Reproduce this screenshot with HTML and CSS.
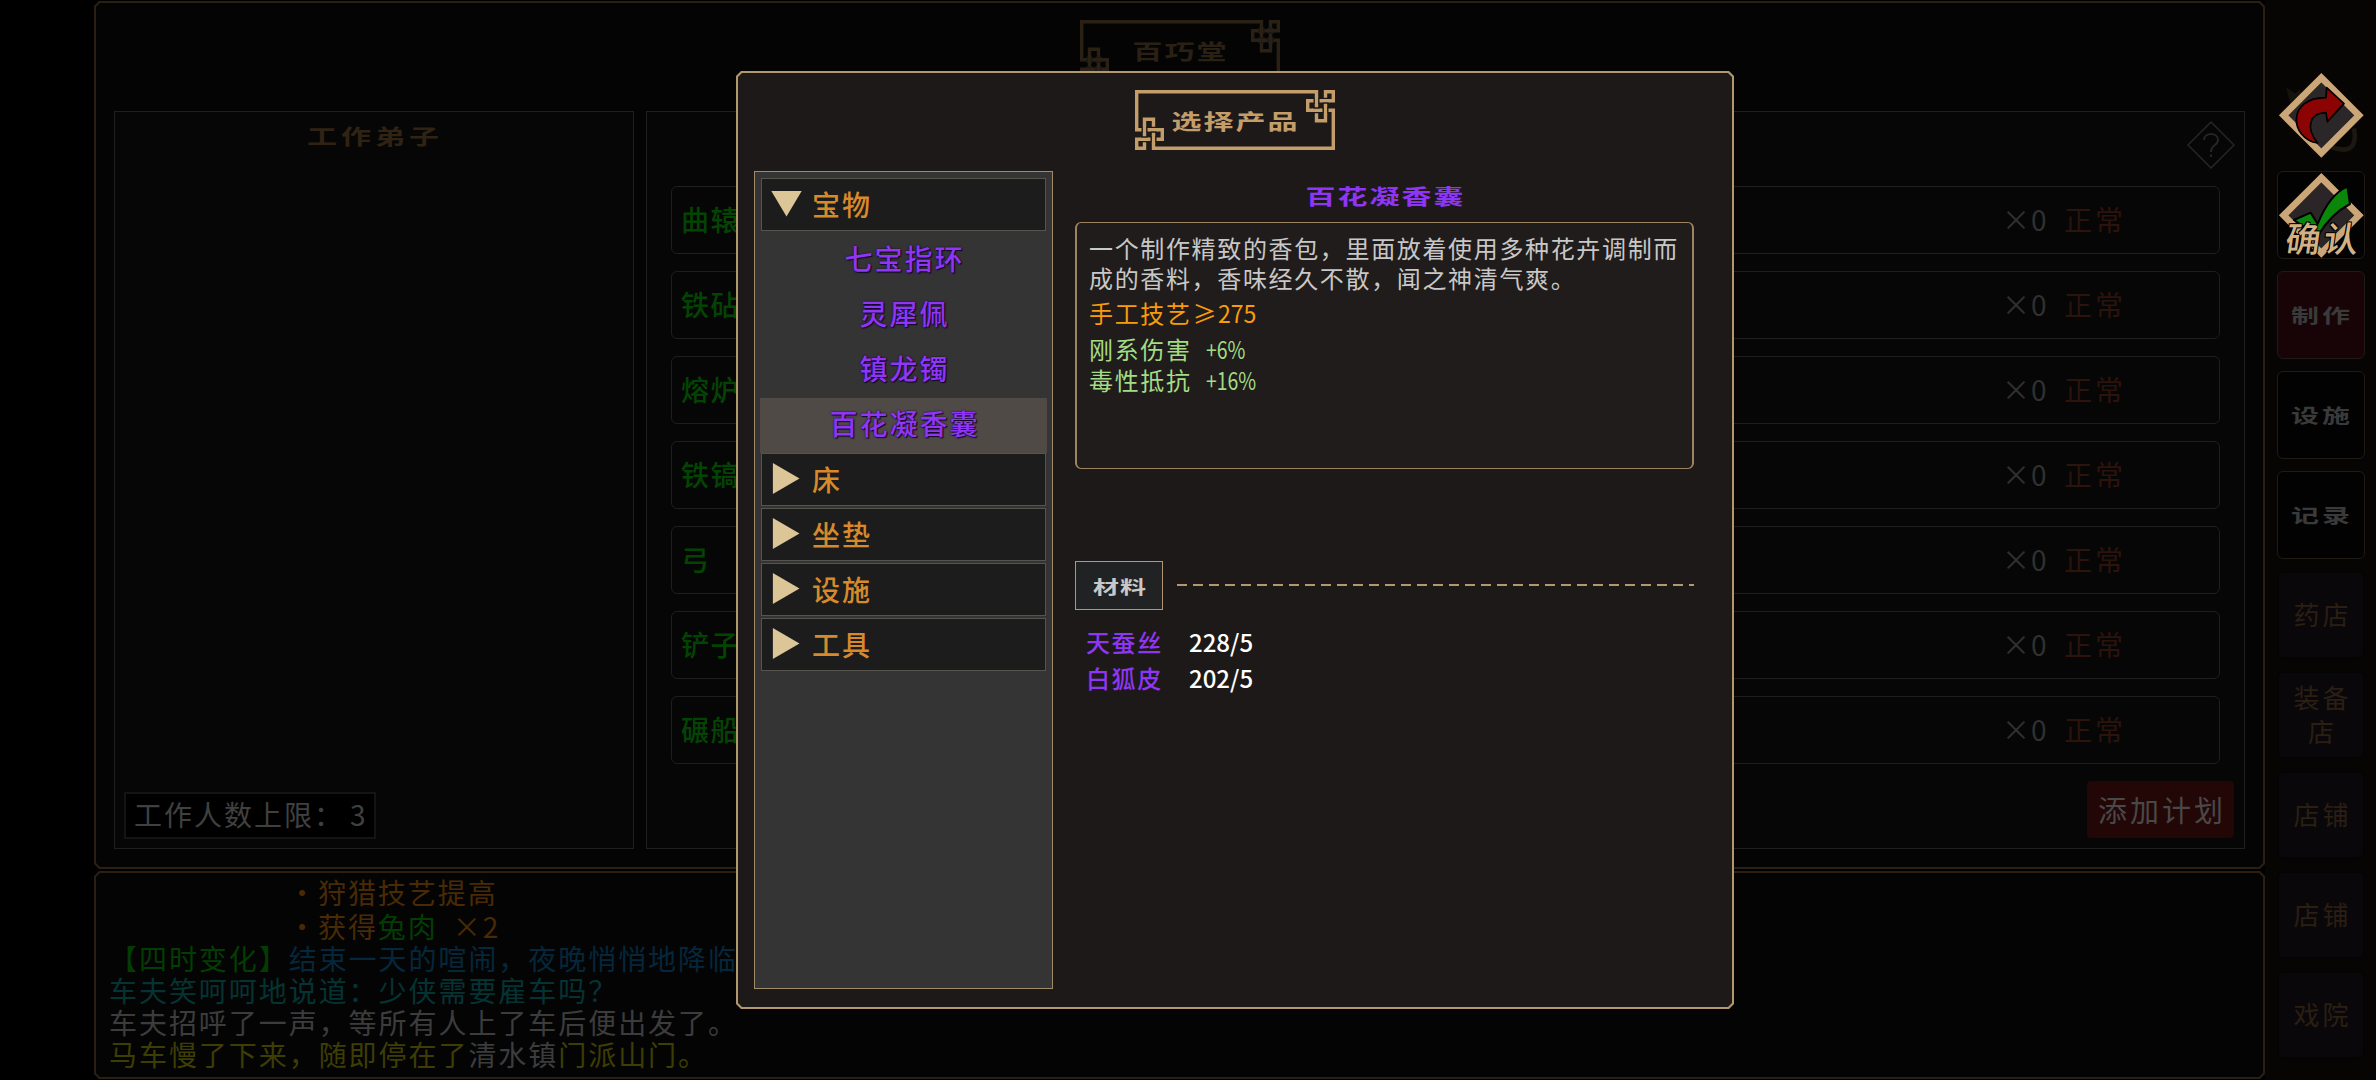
FILE: index.html
```html
<!DOCTYPE html>
<html lang="zh-CN">
<head>
    <meta charset="UTF-8">
    <meta name="viewport" content="width=device-width, initial-scale=1.0">
    <title>百巧堂</title>
    <link rel="stylesheet" href="styles.css">
</head>
<body>
    <svg class="defs">
        <symbol id="plaque" viewBox="0 0 200 60">
            <path d="M1.7 1.7V39.7H27.3V49.3H1.7V58.3H9.5V29.3H18.5V58.3H198.3V20.3H172.7V10.7H198.3V1.7H190.5V30.7H181.5V1.7Z" fill="none" stroke="currentColor" stroke-width="3.4"/>
            <g class="cut">
                <path d="M181.5 7.5V14M190.5 17V23.5M187.3 10.7H193.7M178.3 20.3H184.7"/>
                <path d="M18.5 46V52.5M9.5 36.5V43M6.3 49.3H12.7M15.3 39.7H21.7"/>
            </g>
            <g fill="none" stroke="currentColor" stroke-width="3.2">
                <path d="M181.5 6V15M190.5 16V25M186 10.7H195M177 20.3H186"/>
                <path d="M18.5 45V54M9.5 35V44M5 49.3H14M14 39.7H23"/>
            </g>
        </symbol>
    </svg>

    <div class="screen">
        <main class="main">
            <section class="frame workshop">
                <div class="frame-body">
                    <div class="plaque plaque-dim">
                        <svg><use href="#plaque"/></svg>
                        <span class="li">百巧堂</span>
                    </div>
                    <div class="columns">
                        <div class="box workers">
                            <h2 class="li">工作弟子</h2>
                            <div class="limit">工作人数上限：<span>3</span></div>
                        </div>
                        <div class="box plans">
                            <div class="plans-head">
                                <svg class="help" width="48" height="48" viewBox="0 0 48 48" fill="none" stroke="#262626" stroke-width="1.5">
                                    <path d="M24 1L47 24L24 47L1 24Z"/>
                                    <path d="M17 19C17 11 31 11 31 19C31 25 24 23 24 31" stroke-width="2"/>
                                    <path d="M24 33.5V36" stroke-width="2"/>
                                </svg>
                            </div>
                            <div class="plan-list" id="planList"></div>
                            <div class="plans-foot"><button class="add">添加计划</button></div>
                        </div>
                    </div>
                </div>
            </section>
            <section class="frame log">
                <div class="frame-body">
                    <p class="orange indent first">·狩猎技艺提高</p>
                    <p class="orange indent">·获得<span class="green">兔肉</span><span class="count">×2</span></p>
                    <p class="blue"><span class="green">【四时变化】</span>结束一天的喧闹，夜晚悄悄地降临</p>
                    <p class="teal">车夫笑呵呵地说道：少侠需要雇车吗？</p>
                    <p class="gray">车夫招呼了一声，等所有人上了车后便出发了。</p>
                    <p class="yellow">马车慢了下来，随即停在了<span class="gray">清水镇</span>门派山门。</p>
                </div>
            </section>
        </main>
        <nav class="side">
            <div class="tab"></div>
            <div class="tab active"><span class="li">制作</span></div>
            <div class="tab"><span class="li">设施</span></div>
            <div class="tab"><span class="li">记录</span></div>
            <div class="tab shop">药店</div>
            <div class="tab shop">装备店</div>
            <div class="tab shop">店铺</div>
            <div class="tab shop">店铺</div>
            <div class="tab shop">戏院</div>
        </nav>
    </div>

    <div class="frame modal">
        <div class="frame-body">
            <div class="plaque">
                <svg><use href="#plaque"/></svg>
                <span class="li">选择产品</span>
            </div>
            <div class="modal-cols">
                <div class="tree">
                    <div class="cat"><i class="down"></i>宝物</div>
                    <div class="item">七宝指环</div>
                    <div class="item">灵犀佩</div>
                    <div class="item">镇龙镯</div>
                    <div class="item selected">百花凝香囊</div>
                    <div class="cat"><i class="right"></i>床</div>
                    <div class="cat"><i class="right"></i>坐垫</div>
                    <div class="cat"><i class="right"></i>设施</div>
                    <div class="cat"><i class="right"></i>工具</div>
                </div>
                <div class="detail">
                    <h3><span class="li">百花凝香囊</span></h3>
                    <div class="info">
                        <p>一个制作精致的香包，里面放着使用多种花卉调制而成的香料，香味经久不散，闻之神清气爽。</p>
                        <p class="need">手工技艺<span class="ge">≥</span><span class="num">275</span></p>
                        <p class="buff">刚系伤害<span class="num plus">+6%</span></p>
                        <p class="buff">毒性抵抗<span class="num plus">+16%</span></p>
                    </div>
                    <div class="divider">
                        <div class="tag"><span class="li">材料</span></div>
                        <div class="dash"></div>
                    </div>
                    <div class="mat"><span>天蚕丝</span><em>228/5</em></div>
                    <div class="mat"><span>白狐皮</span><em>202/5</em></div>
                </div>
            </div>
        </div>
    </div>

    <div class="actions">
        <button class="action">
            <svg width="106" height="100" viewBox="0 0 318 300">
                <path d="M48 82L75 100L90 88L100 130L62 135Z" fill="#15110d"/>
                <path d="M185 262C240 280 262 262 252 205" fill="none" stroke="#1b1711" stroke-width="14"/>
                <path d="M154 53L267 166L154 279L41 166Z" fill="#2b2729" stroke="#cba679" stroke-width="20"/>
                <path d="M143 249C58 235 50 112 168 113L170 83L222 131L172 185L168 158C118 158 106 205 143 249Z" fill="#8c0303" stroke="#000" stroke-width="5" stroke-linejoin="round"/>
            </svg>
        </button>
        <button class="action">
            <svg width="106" height="100" viewBox="0 0 318 300">
                <path d="M154 53L267 166L154 279L41 166Z" fill="#2b2527" stroke="#cba679" stroke-width="20"/>
                <path d="M72 180L122 158L143 192C162 145 190 98 232 80L240 132C205 150 172 180 143 228Z" fill="#0a860a" stroke="#000" stroke-width="6" stroke-linejoin="round"/>
            </svg>
            <span>确认</span>
        </button>
    </div>

    <script>
        const plans = ["曲辕犁", "铁砧", "熔炉", "铁镐", "弓", "铲子", "碾船"];
        const planList = document.getElementById("planList");
        plans.forEach(name => {
            const row = document.createElement("div");
            row.classList.add("plan");
            row.innerHTML = `<span class="name">${name}</span><span class="qty">×0</span><span class="state">正常</span>`;
            planList.appendChild(row);
        });
    </script>
</body>
</html>
```
FILE: styles.css
```css
* {
    box-sizing: border-box;
}
body {
    margin: 0;
    width: 2376px;
    height: 1080px;
    overflow: hidden;
    position: relative;
    background: #000;
    font-family: "Noto Sans CJK SC", sans-serif;
    font-size: 28px;
}
h2, h3, p {
    margin: 0;
    font-weight: normal;
}
button {
    border: none;
    font-family: inherit;
}
.defs {
    position: absolute;
    width: 0;
    height: 0;
}
.cut {
    fill: none;
    stroke: #1d1918;
    stroke-width: 6;
}
/* wide, flat clerical lettering */
.li {
    display: inline-block;
    font-family: "Noto Sans CJK SC", sans-serif;
    font-weight: 700;
    font-size: 30px;
    line-height: 30px;
    letter-spacing: 2px;
    margin-right: -2px;
    transform: scaleY(0.7);
}
/* frame with cut corners, the outer layer shows through as the line */
.frame {
    background: #2a1f12;
    padding: 2px;
    clip-path: polygon(5px 0, calc(100% - 5px) 0, 100% 5px, 100% calc(100% - 5px), calc(100% - 5px) 100%, 5px 100%, 0 calc(100% - 5px), 0 5px);
}
.frame-body {
    height: 100%;
    background: #040404;
    clip-path: polygon(4px 0, calc(100% - 4px) 0, 100% 4px, 100% calc(100% - 4px), calc(100% - 4px) 100%, 4px 100%, 0 calc(100% - 4px), 0 4px);
}
.screen {
    display: flex;
    height: 1080px;
    padding-left: 94px;
}
.main {
    width: 2171px;
    padding-top: 1px;
    display: flex;
    flex-direction: column;
    gap: 2px;
}
.workshop {
    height: 868px;
}
.workshop .frame-body {
    padding: 17px 18px;
}
.plaque {
    position: relative;
    width: 200px;
    height: 60px;
    margin: 0 auto;
    display: flex;
    align-items: center;
    justify-content: center;
    color: #c39e6a;
}
.plaque svg {
    position: absolute;
    left: 0;
    top: 0;
    width: 200px;
    height: 60px;
}
.plaque-dim {
    color: #2a2013;
}
.plaque-dim .cut {
    stroke: #040404;
}
.columns {
    display: flex;
    gap: 12px;
    margin-top: 31px;
}
.box {
    height: 738px;
    border: 1px solid #1f1f1f;
    background: #060606;
    display: flex;
    flex-direction: column;
}
.workers {
    width: 520px;
    padding: 8px 9px 9px;
    justify-content: space-between;
    align-items: flex-start;
}
.workers h2 {
    align-self: center;
    color: #302313;
    letter-spacing: 4px;
}
.limit {
    width: 252px;
    height: 47px;
    border: 2px solid #141414;
    background: #000;
    color: #404040;
    letter-spacing: 2px;
    line-height: 41px;
    padding-left: 8px;
    white-space: nowrap;
}
.limit span {
    margin-left: 6px;
}
.plans {
    flex: 1;
    padding: 0 10px 8px 24px;
}
.plans-head {
    height: 74px;
    display: flex;
    justify-content: flex-end;
    align-items: center;
}
.help {
    margin: -9px -1px 0 0;
}
.plan-list {
    display: flex;
    flex-direction: column;
    gap: 17px;
    width: 1549px;
}
.plan {
    height: 68px;
    border: 1px solid #1f1e1a;
    border-radius: 6px;
    display: flex;
    align-items: center;
    padding: 0 96px 2px 9px;
}
.plan .name {
    flex: 1;
    color: #034403;
    font-weight: 500;
    letter-spacing: 1.5px;
}
.plan .qty {
    width: 62px;
    color: #303030;
    letter-spacing: 1px;
}
.plan .state {
    color: #2c130c;
    letter-spacing: 3px;
    margin-right: -3px;
}
.plans-foot {
    margin-top: 17px;
    display: flex;
    justify-content: flex-end;
}
.add {
    width: 147px;
    height: 57px;
    border-radius: 4px;
    background: #230606;
    color: #484848;
    font-size: 29px;
    letter-spacing: 3px;
    padding: 0 0 2px 3px;
    white-space: nowrap;
}
.log {
    height: 208px;
}
.log .frame-body {
    padding: 1px 13px;
}
.log p {
    line-height: 32px;
    letter-spacing: 1.95px;
    white-space: nowrap;
}
.log .first {
    line-height: 36px;
}
.log .indent {
    padding-left: 179px;
}
.count {
    margin-left: 15px;
}
.orange {
    color: #492a05;
}
.green {
    color: #033d03;
}
.blue {
    color: #04273c;
}
.teal {
    color: #053333;
}
.gray {
    color: #3c3c3c;
}
.yellow {
    color: #3d3d04;
}
.side {
    flex: 1;
    background: #070503;
    padding: 171px 11px 0 12px;
    display: flex;
    flex-direction: column;
    gap: 12px;
}
.tab {
    flex: none;
    height: 88px;
    border: 1px solid #201a14;
    border-radius: 6px;
    background: #020202;
    color: #3a3a3a;
    display: flex;
    align-items: center;
    justify-content: center;
}
.tab.active {
    background: #180406;
}
.tab .li {
    font-size: 28px;
    letter-spacing: 3px;
}
.tab.shop {
    background: #09070a;
    border: 2px solid #050404;
    color: #2a1f12;
    font-size: 26px;
    line-height: 34px;
    letter-spacing: 3px;
    padding: 0 10px 2px 13px;
    text-align: center;
}
/* product picker */
.modal {
    position: absolute;
    left: 736px;
    top: 71px;
    width: 998px;
    height: 938px;
    background: #b3986f;
}
.modal .frame-body {
    background: #1d1918;
    padding: 17px 17px 17px 16px;
}
.modal-cols {
    display: flex;
    gap: 22px;
    margin-top: 21px;
}
.tree {
    width: 299px;
    height: 818px;
    background: #343434;
    border: 1px solid #a18a6a;
    padding: 6px 5px;
}
.cat {
    height: 53px;
    margin: 0 1px 2px;
    padding-bottom: 2px;
    background: #1c1c1c;
    border: 1px solid #57534e;
    display: flex;
    align-items: center;
    color: #d8892a;
    font-weight: 500;
    letter-spacing: 2px;
}
.cat i {
    width: 31px;
    height: 31px;
    margin: 0 10px 0 9px;
    background: #dcc596;
}
.cat .down {
    height: 26px;
    clip-path: polygon(0 0, 100% 0, 50% 100%);
}
.cat .right {
    clip-path: polygon(6% 0, 92% 50%, 6% 100%);
}
.item {
    height: 55px;
    line-height: 51px;
    padding-left: 2px;
    text-align: center;
    color: #8f35f4;
    font-weight: 500;
    letter-spacing: 2px;
    text-shadow: 0 0 2px #14042a, 1px 1px 1px #14042a;
}
.item.selected {
    background: #4f4a46;
}
.detail {
    width: 619px;
}
.detail h3 {
    height: 51px;
    padding-top: 8px;
    line-height: 30px;
    text-align: center;
    color: #8f35f4;
}
.info {
    height: 247px;
    border: 2px solid #9c8460;
    border-width: 1px 2px;
    border-radius: 6px;
    background: #201c1b;
    padding: 10px 12px;
    color: #c8c8c8;
    font-size: 24px;
    font-weight: 500;
    letter-spacing: 1.65px;
}
.info p {
    line-height: 30px;
    margin-right: -10px;
}
.info .need {
    color: #f99b0b;
    margin-top: 5px;
}
.info .buff {
    color: #a3dc85;
    margin-top: 6px;
}
.info .buff + .buff {
    margin-top: 1px;
}
.num {
    display: inline-block;
    letter-spacing: 0;
    transform: scaleX(0.96);
    transform-origin: left;
}
.ge {
    display: inline-block;
    width: 26px;
    text-align: center;
    letter-spacing: 0;
}
.plus {
    margin-left: 14px;
    transform: scaleX(0.81);
}
.divider {
    display: flex;
    align-items: center;
    margin-top: 92px;
}
.tag {
    width: 88px;
    height: 49px;
    border: 1px solid #b3986f;
    background: #212223;
    color: #c8c8c8;
    display: flex;
    align-items: center;
    justify-content: center;
}
.tag .li {
    font-size: 26px;
    letter-spacing: 1px;
}
.dash {
    width: 518px;
    height: 2px;
    margin: -2px 0 0 14px;
    background: repeating-linear-gradient(90deg, #b3986f 0 10.5px, transparent 10.5px 16px);
}
.mat {
    display: flex;
    height: 36px;
    line-height: 36px;
    padding-left: 11px;
    font-size: 24px;
    font-weight: 500;
    color: #8f35f4;
}
.divider + .mat {
    margin-top: 14px;
}
.mat span {
    width: 103px;
    letter-spacing: 1.6px;
}
.mat em {
    font-style: normal;
    color: #fff;
}
/* confirm / back buttons lying over the side tabs */
.actions {
    position: absolute;
    left: 2270px;
    top: 60px;
}
.action {
    display: block;
    position: relative;
    width: 106px;
    height: 100px;
    padding: 0;
    background: none;
}
.action svg {
    display: block;
}
.action span {
    position: absolute;
    left: 16px;
    top: 56px;
    font-size: 35px;
    font-weight: 500;
    line-height: 42px;
    letter-spacing: 3px;
    white-space: nowrap;
    color: #d3b184;
    transform: skewX(-8deg);
    text-shadow: 1px 1px 0 #000, -1px -1px 0 #000, 1px -1px 0 #000, -1px 1px 0 #000;
}
```
